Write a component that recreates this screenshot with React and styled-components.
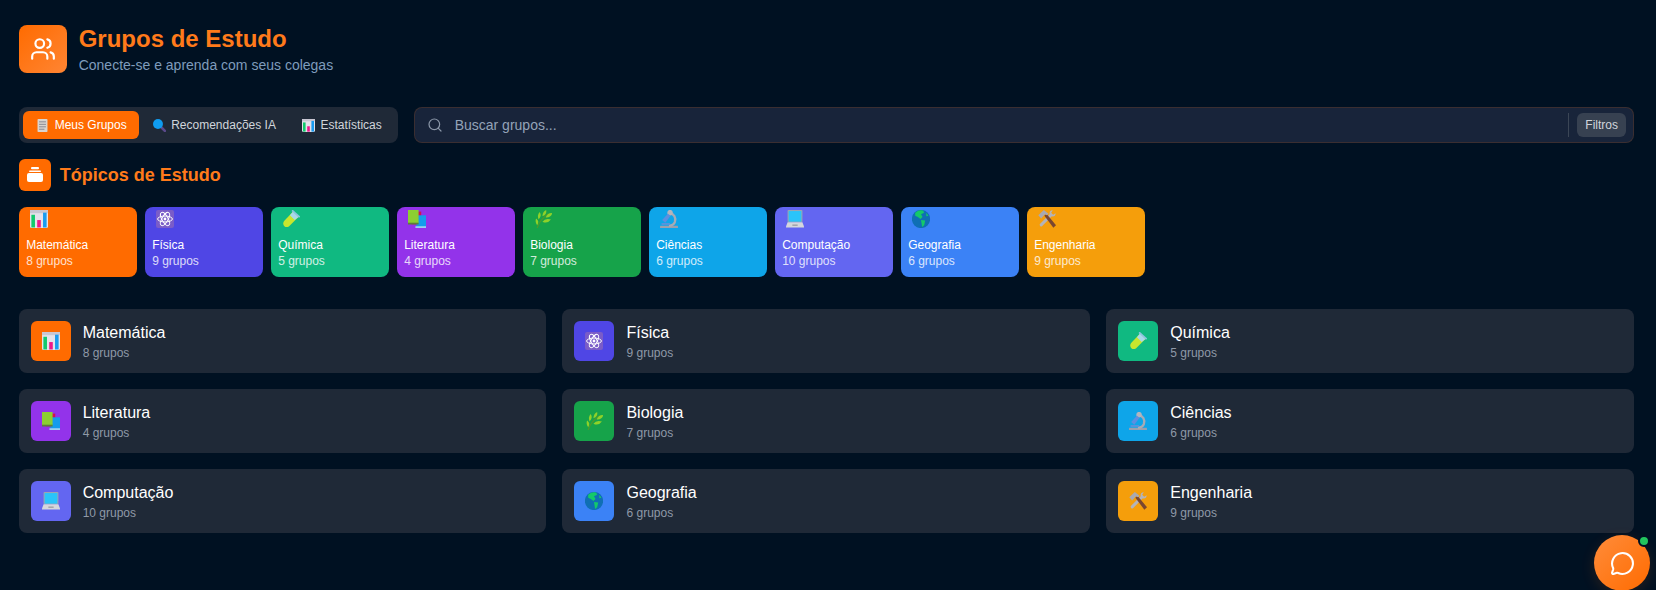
import React from 'react';
import styled, { createGlobalStyle } from 'styled-components';
import { Users, Search, MessageCircle } from 'lucide-react';

const GlobalStyle = createGlobalStyle`
  * { box-sizing: border-box; }
  html, body { margin: 0; padding: 0; background: #001122; }
  body { font-family: "Liberation Sans", Arial, sans-serif; overflow: hidden; }
`;

const Page = styled.div`
  height: 590px;
  padding: 25px 22px 0 18.67px;
  background: #001122;
  display: flex;
  flex-direction: column;
`;

const Header = styled.header`
  display: flex;
  align-items: flex-start;
  gap: 12px;
  height: 48px;
  margin-bottom: 34px;
`;

const HeaderIcon = styled.div`
  width: 48px;
  height: 48px;
  border-radius: 8px;
  background: linear-gradient(135deg, #ff6b00, #ff8533);
  color: #fff;
  display: flex;
  align-items: center;
  justify-content: center;
`;

const Title = styled.h1`
  margin: 0;
  font-size: 24px;
  line-height: 28px;
  font-weight: 700;
  color: #ff7a1a;
`;

const Subtitle = styled.p`
  margin: 3px 0 0;
  font-size: 14px;
  line-height: 18px;
  color: #7f9cbc;
`;

const Toolbar = styled.div`
  display: flex;
  gap: 16px;
  height: 36px;
  margin-bottom: 16px;
`;

const Tabs = styled.nav`
  display: flex;
  padding: 4px;
  width: 379px;
  background: #1f2937;
  border-radius: 8px;
`;

const Tab = styled.button`
  display: flex;
  align-items: center;
  gap: 4px;
  padding: 0 12.5px 0 12px;
  border: none;
  border-radius: 6px;
  background: ${(p) => (p.$active ? '#ff6b00' : 'transparent')};
  color: ${(p) => (p.$active ? '#fff' : '#d1d5db')};
  font: 12px "Liberation Sans", Arial, sans-serif;
  white-space: nowrap;
`;

const EmojiSlot = styled.span`
  width: 16px;
  display: flex;
  justify-content: center;
  flex: none;
`;

const SearchBox = styled.div`
  flex: 1;
  display: flex;
  align-items: center;
  padding: 0 7px 0 12px;
  background: #18243a;
  border: 1px solid rgba(255, 107, 0, 0.15);
  border-radius: 8px;
  color: #8b97a8;
`;

const SearchText = styled.span`
  flex: 1;
  margin-left: 12px;
  font-size: 14px;
  color: #94a3b8;
`;

const Divider = styled.span`
  width: 1px;
  height: 24px;
  margin-right: 8px;
  background: #3b4656;
`;

const FilterButton = styled.button`
  height: 24px;
  padding: 0 8px;
  border: none;
  border-radius: 6px;
  background: #374151;
  color: #d1d5db;
  font: 12px "Liberation Sans", Arial, sans-serif;
`;

const SectionHeader = styled.div`
  display: flex;
  align-items: center;
  gap: 9px;
  height: 32px;
  margin-bottom: 16px;
`;

const SectionIcon = styled.div`
  width: 32px;
  height: 32px;
  border-radius: 6px;
  background: #ff6b00;
  display: flex;
  align-items: center;
  justify-content: center;
`;

const SectionTitle = styled.h2`
  margin: 0;
  font-size: 18px;
  font-weight: 700;
  color: #ff7a1a;
`;

const TopicRow = styled.div`
  display: flex;
  gap: 8px;
  margin-bottom: 32px;
`;

const TopicCard = styled.div`
  width: 118px;
  height: 70px;
  padding: 3px 7.5px 0;
  border-radius: 8px;
  background: ${(p) => p.$color};
  color: #fff;
`;

const TopicEmoji = styled.div`
  height: 18px;
  margin: 0 0 9px 3.5px;
  display: flex;
`;

const TopicName = styled.div`
  font-size: 12px;
  line-height: 16px;
  font-weight: 500;
`;

const TopicCount = styled.div`
  font-size: 12px;
  line-height: 16px;
  opacity: 0.8;
`;

const GroupGrid = styled.div`
  display: grid;
  grid-template-columns: repeat(3, 1fr);
  gap: 16px;
`;

const GroupCard = styled.div`
  display: flex;
  align-items: center;
  gap: 12px;
  height: 64px;
  padding: 0 12px;
  border-radius: 8px;
  background: #1f2937;
`;

const GroupIcon = styled.div`
  width: 40px;
  height: 40px;
  border-radius: 6px;
  background: ${(p) => p.$color};
  display: flex;
  align-items: center;
  justify-content: center;
`;

const GroupText = styled.div`
  padding-top: 1px;
`;

const GroupName = styled.div`
  font-size: 16px;
  line-height: 20px;
  color: #fff;
`;

const GroupCount = styled.div`
  margin-top: 2px;
  font-size: 12px;
  line-height: 16px;
  color: #8f99a8;
`;

const ChatButton = styled.button`
  position: fixed;
  left: 1594px;
  top: 535px;
  width: 56px;
  height: 56px;
  border: none;
  border-radius: 50%;
  background: linear-gradient(135deg, #ff8c3a, #ff6b00);
  box-shadow: 0 4px 14px rgba(255, 107, 0, 0.15);
  color: #fff;
  display: flex;
  align-items: center;
  justify-content: center;
`;

const OnlineDot = styled.span`
  position: absolute;
  left: 44px;
  top: 0;
  width: 12px;
  height: 12px;
  border: 2px solid #001122;
  border-radius: 50%;
  background: #22c55e;
`;

// the pictures in the reference are colour emoji, drawn by hand here
const emojis = {
  chart: (
    <>
      <rect x="0.5" y="0.5" width="17" height="17" rx="1.5" fill="#e4e2ea" />
      <rect x="0.5" y="0.5" width="17" height="3" fill="#c8c6d2" />
      <rect x="1.8" y="5" width="3.4" height="12" fill="#12c96d" />
      <rect x="7.3" y="10" width="3.4" height="7" fill="#f0168a" />
      <rect x="12.8" y="3" width="3.4" height="14" fill="#1a9cf0" />
    </>
  ),
  atom: (
    <>
      <rect x="0.5" y="0.5" width="17" height="17" rx="2" fill="#7a5cc8" />
      <g fill="none" stroke="#fff" strokeWidth="0.9">
        <ellipse cx="9" cy="9" rx="7" ry="2.8" />
        <ellipse cx="9" cy="9" rx="7" ry="2.8" transform="rotate(60 9 9)" />
        <ellipse cx="9" cy="9" rx="7" ry="2.8" transform="rotate(120 9 9)" />
      </g>
      <circle cx="9" cy="9" r="1.3" fill="#fff" />
    </>
  ),
  flask: (
    <>
      <path d="M11 2 L16 7 L7 16 Q4.5 17.5 2.5 15.5 Q0.8 13.5 2.5 11 Z" fill="#c8e62e" />
      <path d="M11 2 L16 7 L12.5 10 L8 5.5 Z" fill="#a8d8ea" />
      <path d="M10 0.8 L17.2 7.2" stroke="#8cc4e0" strokeWidth="1.6" />
    </>
  ),
  books: (
    <>
      <rect x="4" y="2" width="9" height="12" fill="#d2124f" />
      <rect x="8.5" y="5.5" width="9" height="11" fill="#149cec" />
      <rect x="7.5" y="15.8" width="10" height="1.7" fill="#9ad0f0" />
      <rect x="0.5" y="0.5" width="10" height="12.5" fill="#8ccf32" />
      <rect x="0.5" y="12.5" width="10" height="1.7" fill="#5e7d3c" />
    </>
  ),
  herb: (
    <g fill="#8fd129">
      <path d="M3.5 17.5 Q5.5 10 14 4" fill="none" stroke="#4d9a2a" strokeWidth="1.1" />
      <path d="M8.5 6.5 Q8.5 2 12 0.5 Q13 4.5 8.5 6.5Z" />
      <path d="M11.5 7.5 Q13.5 3 17.8 3.5 Q16.5 8 11.5 7.5Z" />
      <path d="M4.8 9.5 Q3.2 5.5 5.8 2.5 Q8.3 6 4.8 9.5Z" />
      <path d="M8.5 11.5 Q11 8 16.5 9.5 Q13 14 8.5 11.5Z" />
      <path d="M3.5 15 Q1.2 11.5 2.5 8.5 Q6 11 3.5 15Z" />
    </g>
  ),
  microscope: (
    <>
      <rect x="0.5" y="15.3" width="17" height="2.2" rx="0.5" fill="#9aa0ae" />
      <path d="M9 3 Q16.5 5 14.5 12 Q13.5 15 9 15.5" fill="none" stroke="#a7abb5" strokeWidth="2.2" />
      <circle cx="10" cy="3" r="2.6" fill="#b4b4bc" />
      <path d="M8 4 L2.5 10 L5.5 12.5 L10.5 6Z" fill="#5c8fe0" />
      <rect x="2" y="13" width="8" height="1.4" fill="#6d8fd8" />
    </>
  ),
  laptop: (
    <>
      <rect x="2" y="0.5" width="14" height="11.5" rx="0.8" fill="#9aa5b1" />
      <rect x="3" y="1.5" width="12" height="10" fill="#2ac4fa" />
      <path d="M2 12 H16 L17.8 17 H0.2Z" fill="#d5d7dc" />
      <rect x="6.5" y="14.3" width="5" height="1" fill="#8d8f95" />
    </>
  ),
  globe: (
    <>
      <circle cx="9" cy="9" r="8.6" fill="#0f6fb4" />
      <path d="M3.5 3 Q7 0 11 1 L12 3 L9 4.5 L10.5 7 L8.5 9 L6 7 L3.5 6Z" fill="#14c96a" />
      <path d="M9 10 L13 10.5 L12 15 L10 16.5 L9.5 13Z" fill="#14c96a" />
      <path d="M14 3 L16 6 L14 6.5Z" fill="#14c96a" />
    </>
  ),
  tools: (
    <>
      <path d="M2.5 13.5 L12 4 L14 6 L4.5 15.5 Q3.5 16.5 2.5 15.5 Q1.5 14.5 2.5 13.5Z" fill="#b3b3ba" />
      <path d="M11.5 4.5 Q11 1 14.5 0.8 L13 3.2 L14.8 5 L17.2 3.5 Q17 7 13.5 6.5Z" fill="#b3b3ba" />
      <path d="M6.5 6 L8.5 4 L17.5 14.8 L15 17.3Z" fill="#7a4630" />
      <path d="M0.8 5.5 L6 0.5 L10.5 4 L9 5.5 L7 4.5 L3.5 8.5Z" fill="#a9a9b2" />
    </>
  ),
  memo: (
    <>
      <rect x="2.5" y="0.5" width="13" height="17" rx="1" fill="#d9d4cf" />
      <rect x="4.5" y="3.5" width="9" height="1.4" fill="#8f8f98" />
      <rect x="4.5" y="6.8" width="9" height="1.4" fill="#8f8f98" />
      <rect x="4.5" y="10" width="9" height="1.4" fill="#8f8f98" />
      <rect x="4.5" y="13.2" width="7" height="1.4" fill="#8f8f98" />
    </>
  ),
  magnifier: (
    <>
      <path d="M10 10 L16 16" stroke="#5b4a8c" strokeWidth="3.4" strokeLinecap="round" />
      <circle cx="7" cy="7" r="6.5" fill="#0f9cf0" />
    </>
  ),
};

const Emoji = ({ name, size = 18 }) => (
  <svg width={size} height={size} viewBox="0.5 0.5 17 17">
    {emojis[name]}
  </svg>
);

const topics = [
  { name: 'Matemática', count: 8, color: '#ff6b00', emoji: 'chart' },
  { name: 'Física', count: 9, color: '#4f46e5', emoji: 'atom' },
  { name: 'Química', count: 5, color: '#10b981', emoji: 'flask' },
  { name: 'Literatura', count: 4, color: '#9333ea', emoji: 'books' },
  { name: 'Biologia', count: 7, color: '#16a34a', emoji: 'herb' },
  { name: 'Ciências', count: 6, color: '#0ea5e9', emoji: 'microscope' },
  { name: 'Computação', count: 10, color: '#6366f1', emoji: 'laptop' },
  { name: 'Geografia', count: 6, color: '#3b82f6', emoji: 'globe' },
  { name: 'Engenharia', count: 9, color: '#f59e0b', emoji: 'tools' },
];

const tabs = [
  { label: 'Meus Grupos', emoji: 'memo', active: true },
  { label: 'Recomendações IA', emoji: 'magnifier' },
  { label: 'Estatísticas', emoji: 'chart' },
];

export default function App() {
  return (
    <Page>
      <GlobalStyle />
      <Header>
        <HeaderIcon>
          <Users size={26} strokeWidth={2} />
        </HeaderIcon>
        <div>
          <Title>Grupos de Estudo</Title>
          <Subtitle>Conecte-se e aprenda com seus colegas</Subtitle>
        </div>
      </Header>

      <Toolbar>
        <Tabs>
          {tabs.map((t) => (
            <Tab key={t.label} $active={t.active}>
              <EmojiSlot>
                <Emoji name={t.emoji} size={13} />
              </EmojiSlot>
              {t.label}
            </Tab>
          ))}
        </Tabs>
        <SearchBox>
          <Search size={16} strokeWidth={1.8} />
          <SearchText>Buscar grupos...</SearchText>
          <Divider />
          <FilterButton>Filtros</FilterButton>
        </SearchBox>
      </Toolbar>

      <SectionHeader>
        <SectionIcon>
          <svg width="16" height="16" viewBox="0 0 16 16" fill="#fff">
            <rect x="4" y="0" width="8" height="2.2" rx="1" />
            <rect x="2" y="3.5" width="12" height="1.6" rx="0.8" />
            <rect x="0" y="6" width="16" height="9" rx="2" />
          </svg>
        </SectionIcon>
        <SectionTitle>Tópicos de Estudo</SectionTitle>
      </SectionHeader>

      <TopicRow>
        {topics.map((t) => (
          <TopicCard key={t.name} $color={t.color}>
            <TopicEmoji>
              <Emoji name={t.emoji} />
            </TopicEmoji>
            <TopicName>{t.name}</TopicName>
            <TopicCount>{t.count} grupos</TopicCount>
          </TopicCard>
        ))}
      </TopicRow>

      <GroupGrid>
        {topics.map((t) => (
          <GroupCard key={t.name}>
            <GroupIcon $color={t.color}>
              <Emoji name={t.emoji} />
            </GroupIcon>
            <GroupText>
              <GroupName>{t.name}</GroupName>
              <GroupCount>{t.count} grupos</GroupCount>
            </GroupText>
          </GroupCard>
        ))}
      </GroupGrid>

      <ChatButton>
        <MessageCircle size={25} strokeWidth={2} />
        <OnlineDot />
      </ChatButton>
    </Page>
  );
}
